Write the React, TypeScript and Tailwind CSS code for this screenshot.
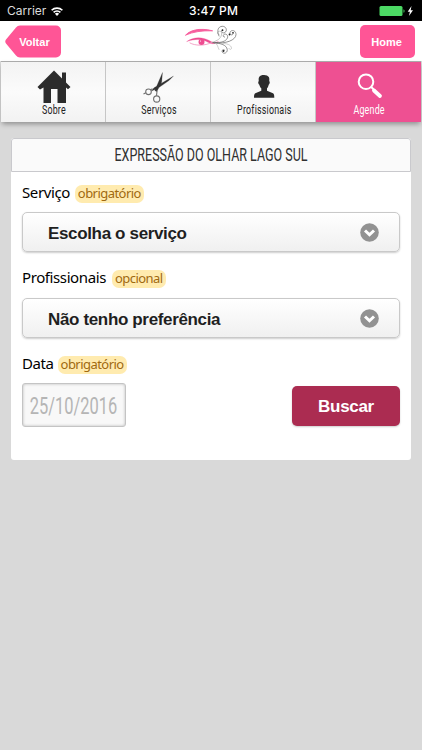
import React from 'react';

const StatusBar: React.FC = () => (
    <div className="relative flex h-[21px] items-center justify-between bg-black px-[7px] text-[12px] leading-none text-white">
        <div className="flex items-center gap-[5px] pt-px text-[#dcdcdc]">
            <span>Carrier</span>
            <svg viewBox="0 0 12 9" className="h-[9px] w-3" fill="none" stroke="#fff" strokeWidth="1.6">
                <path d="M.6 3.3a7.7 7.7 0 0 1 10.8 0M2.6 5.4a4.8 4.8 0 0 1 6.8 0" />
                <path d="M3.9 6.8a3 3 0 0 1 4.2 0L6 9Z" fill="#fff" stroke="none" />
            </svg>
        </div>
        <span className="absolute left-[189px] top-[5px] whitespace-nowrap font-medium tracking-[0.2px]">3:47 PM</span>
        <svg viewBox="0 0 36 12" className="h-3 w-9">
            <rect x=".5" y="1" width="23" height="10" rx="1.5" fill="#4cd964" />
            <path d="M24.5 4.2c1.4.4 1.4 3.2 0 3.6Z" fill="#4cd964" />
            <path d="M32.5 1 28.7 6.700h2.200L29.900 11 34 5.200h-2.300Z" fill="#fff" />
        </svg>
    </div>
);

const Logo: React.FC = () => (
    <svg viewBox="0 0 70 40" className="h-10 w-[70px]" fill="none" strokeLinecap="round">
        <path d="M10.800 17C15 12.300 24 9.500 37.600 12.800 27 12.500 18 13.800 10.800 17Z" fill="#f65d9d" stroke="#f65d9d" strokeWidth=".9" />
        <path d="M12 23.400c6-4.200 15-5.500 24.500.4 2 1 4.500.8 7-.3-4 3-7.500 2.500-10.500.8-6-3.700-13-3.400-21-.9Z" fill="#ee4c91" stroke="#ee4c91" strokeWidth=".3" />
        <path d="M15 25c5 2.800 14 3.200 22-.5" stroke="#f29bc2" strokeWidth=".9" />
        <circle cx="26.500" cy="24" r="3" fill="#ee4c91" />
        <circle cx="25.500" cy="23" r=".6" fill="#fff" />
        <g stroke="#666" strokeWidth=".7">
            <path d="M37 24.500c6-2 8.500-4 9.500-7.500.8-3-1.500-4.800-3.300-3.200-1.300 1.200-.4 3 .9 2.700" stroke="#aaa" />
            <path d="M44 18c-2.500-5-1-9.500 3.200-9.700 4.500-.2 5.600 5.400 2 6.500-2.400.6-3.400-1.800-1.900-2.800" />
            <path d="M38 24.500c9 .8 13-1.700 14.300-4.200 1.500-3-1.600-5.300-3.500-3.700-1.200 1.200-.4 2.700.8 2.500" />
            <path d="M39 24.700c12 1.500 22-2.700 22-8.200 0-4.600-5.200-5-6-2-.5 2 1.700 3.200 2.800 1.900" />
            <path d="M39 25c7 0 12.500 2.200 13.200 6.300.6 4-4.300 5.200-5.100 2.300-.4-1.800 1.500-2.600 2.600-1.400" />
            <path d="M40 25c3 1 2.500 4 4 6.500" stroke="#bbb" />
            <path d="M46 25.300c6 0 10 1.500 10.500 4.700.1 1.800-2.200 2-2.500.4" stroke="#bbb" />
        </g>
        <g fill="#222">
            <circle cx="47.500" cy="12.200" r=".9" />
            <circle cx="54.500" cy="16.500" r=".9" />
            <circle cx="58" cy="14.800" r=".9" />
            <circle cx="48.500" cy="33" r=".9" />
        </g>
    </svg>
);

const Header: React.FC = () => (
    <header className="relative flex h-10 items-start justify-between bg-white pl-[5px] pr-[7px] pt-1 text-[11px] font-bold text-white">
        <button className="relative h-[33px] w-14 pl-[3px] pt-px text-center">
            <svg viewBox="0 0 56 33" className="absolute inset-0 h-[33px] w-14">
                <path d="M15 .5h36a5 5 0 0 1 5 5v22a5 5 0 0 1-5 5H15q-2.500 0-4-2L1 18.500q-1.500-2 0-4L11 2.500q1.500-2 4-2Z" fill="#ff5596" />
            </svg>
            <span className="relative">Voltar</span>
        </button>
        <div className="absolute left-[175px] top-[-3px]">
            <Logo />
        </div>
        <button className="h-[33px] w-[55px] rounded-[5px] bg-[#ff5596] pr-[2px] pt-px">Home</button>
    </header>
);

const HomeIcon = () => (
    <svg viewBox="0 0 34 34" className="ml-px h-[34px] w-[34px]" fill="#2c2c2c">
        <path d="M17 .5 25 8.500V2.500h4v10l4.500 4.500-2.500 2.300-2-1.700V33h-8.500V19h-6.500v14H6.500V17.500l-3.500 2L.5 17Z" />
    </svg>
);

const ScissorsIcon = () => (
    <svg viewBox="0 0 34 34" className="h-[34px] w-[34px]" fill="none" stroke="#707070" strokeWidth="1.1">
        <path d="M21.500 2.500 13.800 20.500l1.900 1.200 5-9.500ZM32.500 6 13 17.800l-3 3.400 6.500-2.600L28 10.500Z" fill="#333" stroke="#333" strokeWidth=".2" />
        <circle cx="7.500" cy="21.800" r="2.800" />
        <circle cx="15.700" cy="29" r="3.100" />
        <path d="m15.500 25.800.6-5.300M4.800 22.700l-2.300 1.200M9.500 19.700l2-1" />
    </svg>
);

const PersonIcon = () => (
    <svg viewBox="0 0 34 34" className="ml-px h-[34px] w-[34px]" fill="#2c2c2c">
        <path d="M12.200 7c1-1.400 2.400-2 4.800-2s3.900.7 4.800 2.100c.8 1.300.5 3 .4 4.200.8 0 .8 2.800-.5 3.400-.3 1.600-.8 2.700-1.700 3.600v2.400l5.400 2.300c1.600.7 1.900 1.700 1.900 4.700H7c0-3 .3-4 1.900-4.700l5.400-2.300v-2.400c-.9-.9-1.700-2-2-3.600-1.300-.6-1.300-3.400-.5-3.400-.1-1.300-.4-3.100.4-4.300Z" />
    </svg>
);

const SearchIcon = () => (
    <svg viewBox="0 0 34 34" className="ml-[3px] h-[34px] w-[34px]" fill="none" stroke="#fff" strokeLinecap="round">
        <circle cx="13" cy="11.700" r="7.300" strokeWidth="2" />
        <path d="m18.500 17.200 3 3" strokeWidth="2" />
        <path d="m21 20.500 6 5.500" strokeWidth="3.800" />
    </svg>
);

const tabs = [
    { label: 'Sobre', icon: <HomeIcon />, active: false },
    { label: 'Serviços', icon: <ScissorsIcon />, active: false },
    { label: 'Profissionais', icon: <PersonIcon />, active: false },
    { label: 'Agende', icon: <SearchIcon />, active: true },
];

const TabBar: React.FC = () => (
    <nav className="relative mx-px grid h-[61px] grid-cols-4 border-t border-[#aaa] shadow-[0_3px_5px_-1px_rgba(0,0,0,0.35)]">
        {tabs.map((tab) => (
            <a
                key={tab.label}
                className={
                    tab.active
                        ? 'flex flex-col items-center bg-[#ee5092] pt-2 text-white'
                        : 'flex flex-col items-center border-r border-[#c6c6c6] bg-linear-to-b from-[#f3f3f3] via-[#fbfbfb] to-[#f2f2f2] pt-2 text-[#222]'
                }
            >
                {tab.icon}
                <span className="ml-0.5 inline-block origin-center scale-x-[0.71] whitespace-nowrap font-[Roboto] text-[12.5px] leading-[12px] tracking-[0.3px]">
                    {tab.label}
                </span>
            </a>
        ))}
    </nav>
);

interface FieldLabelProps {
    text: string;
    hint: string;
    gap: string;
}

const FieldLabel: React.FC<FieldLabelProps> = ({ text, hint, gap }) => (
    <div className={`flex h-5 items-center font-['Noto_Sans'] leading-5 text-black ${gap}`}>
        <span className="relative -top-px text-[15px] tracking-[-0.4px]">{text}</span>
        <span className="mt-px h-[18px] rounded-[7px] bg-[#ffebaf] px-[3px] text-[13px] leading-[17px] tracking-[-0.55px] text-[#a0690f]">{hint}</span>
    </div>
);

const Select: React.FC<{ value: string }> = ({ value }) => (
    <button className="flex h-10 w-full items-center justify-between rounded-[5px] border border-[#c9c9c9] bg-linear-to-b from-white to-[#f0f0f0] pl-[25px] pr-5 text-[17px] font-bold text-[#1f1f1f] shadow-[0_1px_2px_rgba(0,0,0,0.2)]">
        <span className="pt-[3px] tracking-[-0.35px]">{value}</span>
        <svg viewBox="0 0 19 19" className="h-[19px] w-[19px]">
            <circle cx="9.500" cy="9.500" r="9.300" fill="#929292" />
            <path d="m5 7.500 4.500 4.300L14 7.500" fill="none" stroke="#fff" strokeWidth="3" />
        </svg>
    </button>
);

const App: React.FC = () => {
    return (
        <div className="h-[750px] w-full overflow-hidden bg-[#d9d9d9] font-['Liberation_Sans',sans-serif]">
            <div className="font-[Inter,sans-serif]">
                <StatusBar />
            </div>
            <Header />
            <TabBar />

            <main className="mx-[11px] mt-4 h-[322px] rounded-[3px] bg-white">
                <h1 className="flex h-[34px] items-center justify-center rounded-t-[3px] border border-[#c9c9cd] bg-[#fafafa] text-[#303030]">
                    <span className="inline-block scale-x-[0.715] whitespace-nowrap pt-px font-[Roboto] text-[17.5px]">EXPRESSÃO DO OLHAR LAGO SUL</span>
                </h1>

                <div className="px-[11px] pt-[11px]">
                    <FieldLabel text="Serviço" hint="obrigatório" gap="gap-[5px]" />
                    <div className="mt-[9px]">
                        <Select value="Escolha o serviço" />
                    </div>
                    <div className="mt-4">
                        <FieldLabel text="Profissionais" hint="opcional" gap="gap-1.5" />
                    </div>
                    <div className="mt-[10px]">
                        <Select value="Não tenho preferência" />
                    </div>
                    <div className="mt-4">
                        <FieldLabel text="Data" hint="obrigatório" gap="gap-1" />
                    </div>

                    <div className="mt-[9px] flex items-start justify-between">
                        <div className="flex h-11 w-[104px] items-center justify-center rounded-[3px] border border-[#c4c4c4] bg-[#f8f8f8] text-[#b5b5b5] shadow-[inset_0_0_3px_rgba(0,0,0,0.25)]">
                            <span className="inline-block scale-x-[0.7] whitespace-nowrap pt-[3px] font-[Roboto] text-[23.5px]">25/10/2016</span>
                        </div>
                        <button className="mt-[3px] h-10 w-[108px] rounded-[5px] bg-[#ab2c51] pt-0.5 text-[17px] font-bold tracking-[-0.3px] text-white shadow-[0_1px_2px_rgba(0,0,0,0.2)]">
                            Buscar
                        </button>
                    </div>
                </div>
            </main>
        </div>
    );
};

export default App;
